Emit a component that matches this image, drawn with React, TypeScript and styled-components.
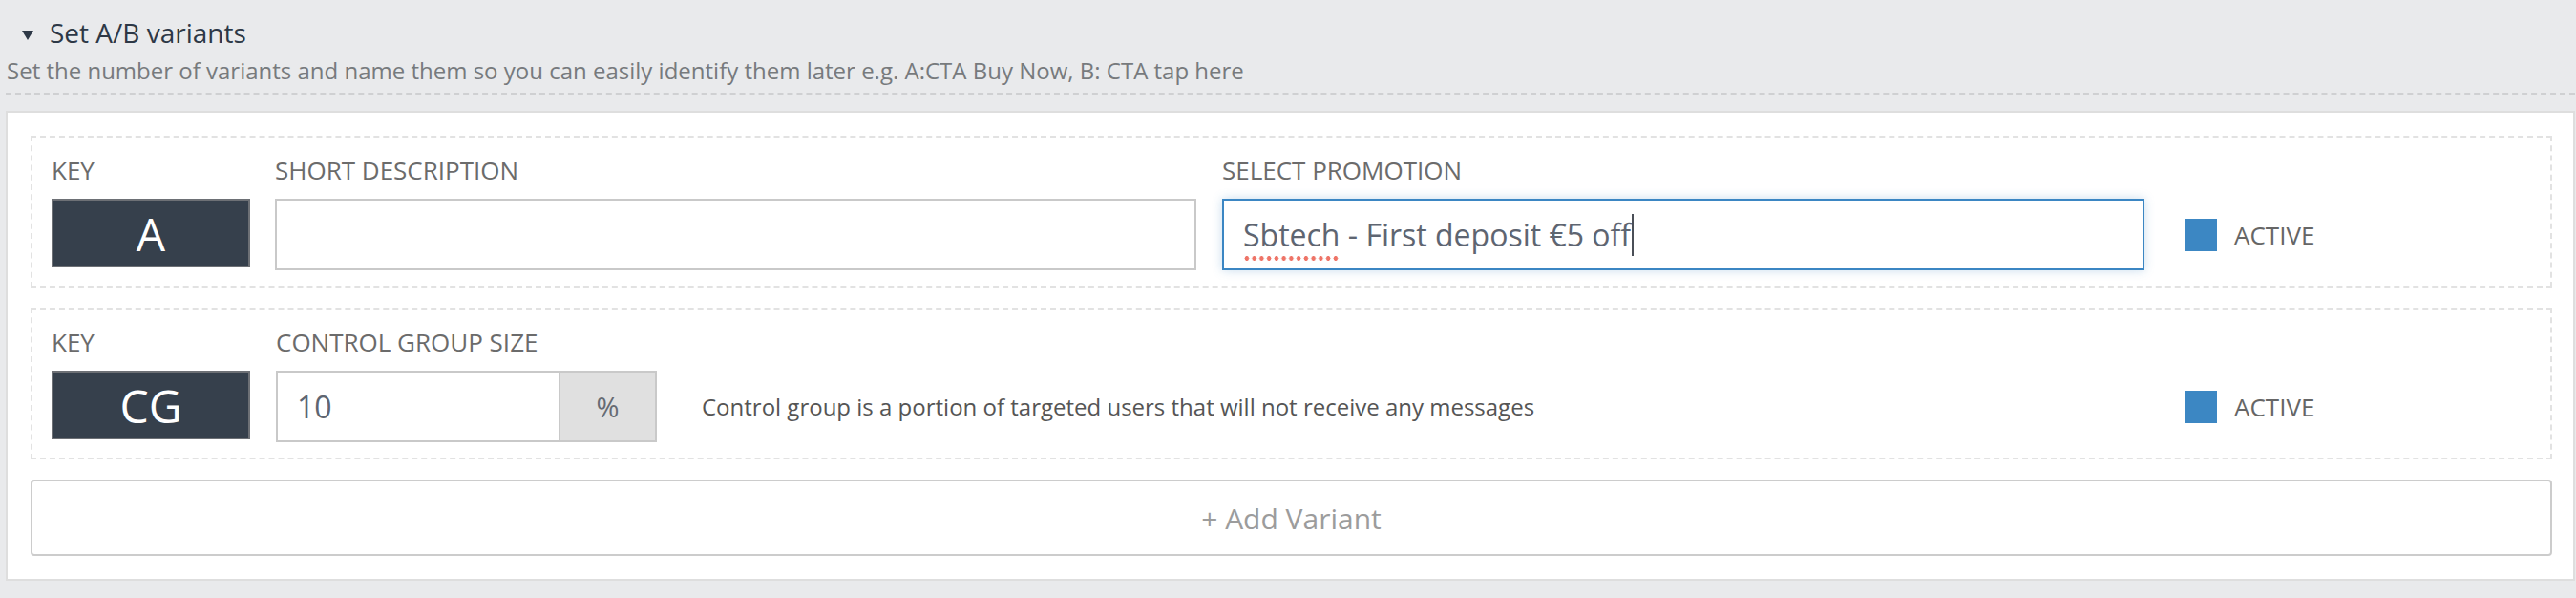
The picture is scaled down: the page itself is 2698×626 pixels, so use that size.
import { FC } from 'react';
import styled, { createGlobalStyle } from 'styled-components';

const GlobalStyle = createGlobalStyle`
  html, body {
    margin: 0;
    padding: 0;
    background: #e9eaec;
    font-family: 'Open Sans', 'Noto Sans', sans-serif;
  }
  #root {
    height: 626px;
  }
`;

const Page = styled.div`
  height: 626px;
  box-sizing: border-box;
  padding: 14px 1px 0 6px;
`;

const Title = styled.h2`
  display: flex;
  align-items: center;
  margin: 0;
  padding-left: 17px;
  font-size: 28px;
  line-height: 41px;
  font-weight: 400;
  color: #2d3846;
`;

const Caret = styled.svg`
  width: 12px;
  height: 10px;
  margin-right: 17px;
  margin-top: 4px;
  flex: none;
`;

const Subtitle = styled.p`
  margin: 4px 0 0 1px;
  font-size: 24px;
  line-height: 29px;
  color: #777a7d;
`;

const Separator = styled.div`
  margin-top: 9px;
  border-top: 2px dashed #cfd0d2;
`;

const Panel = styled.div`
  margin-top: 17px;
  background: #fff;
  border: 2px solid #dedede;
  padding: 24px 22px 24px 24px;
  display: flex;
  flex-direction: column;
  gap: 21px;
`;

const VariantRow = styled.div`
  display: flex;
  align-items: flex-end;
  height: 159px;
  box-sizing: border-box;
  border: 2px dashed #e2e2e2;
  padding: 18px 0 16px 20px;
`;

interface FieldProps {
  $width?: number;
  $gap?: number;
}

const Field = styled.div<FieldProps>`
  display: flex;
  flex-direction: column;
  width: ${(p) => (p.$width ? `${p.$width}px` : 'auto')};
  margin-left: ${(p) => p.$gap ?? 0}px;
  flex: none;
`;

const Label = styled.label`
  font-size: 26px;
  line-height: 33px;
  color: #6b6b6b;
  text-transform: uppercase;
  margin-bottom: 13px;
`;

const KeyBox = styled.div`
  height: 72px;
  box-sizing: border-box;
  background: #36404c;
  border: 2px solid #6d7075;
  color: #fff;
  font-size: 48px;
  display: flex;
  align-items: center;
  justify-content: center;
  margin-bottom: 3px;
`;

const TextBox = styled.div<{ $focused?: boolean; $width?: number }>`
  height: 75px;
  box-sizing: border-box;
  width: ${(p) => (p.$width ? `${p.$width}px` : '100%')};
  background: #fff;
  border: 2px solid ${(p) => (p.$focused ? '#3b86c3' : '#c9c9c9')};
  box-shadow: ${(p) => (p.$focused ? '0 0 10px rgba(59, 134, 195, 0.28)' : 'none')};
  display: flex;
  align-items: center;
  padding: 0 20px;
  font-size: 32px;
  color: #5e6571;
  white-space: nowrap;
`;

const Misspelled = styled.span`
  position: relative;
  &::after {
    content: '';
    position: absolute;
    left: 0;
    right: 0;
    bottom: -6px;
    height: 5px;
    background: radial-gradient(circle, #ee7467 2.2px, transparent 2.6px) 0 0 / 7.75px 5px repeat-x;
  }
`;

const TextCursor = styled.span`
  display: inline-block;
  width: 1.5px;
  height: 44px;
  background: #4a4f57;
  margin-left: 1px;
`;

const InputGroup = styled.div`
  display: flex;
`;

const Addon = styled.div`
  width: 101px;
  height: 75px;
  box-sizing: border-box;
  background: #e0e0e0;
  border: 2px solid #c9c9c9;
  border-left: none;
  display: flex;
  align-items: center;
  justify-content: center;
  font-size: 29px;
  color: #666b73;
`;

const HelpText = styled.div`
  height: 75px;
  margin-left: 47px;
  display: flex;
  align-items: center;
  font-size: 24px;
  color: #555;
  white-space: nowrap;
`;

const ActiveCell = styled.div`
  width: 383px;
  height: 75px;
  margin-left: auto;
  flex: none;
  display: flex;
  align-items: center;
  gap: 18px;
  font-size: 26px;
  color: #666;
`;

const CheckSquare = styled.span`
  width: 34px;
  height: 34px;
  background: #3c87c3;
  display: inline-block;
`;

const AddButton = styled.button`
  height: 80px;
  width: 100%;
  background: #fff;
  border: 2px solid #cccccc;
  border-radius: 4px;
  font-family: inherit;
  font-size: 30px;
  color: #9c9c9c;
  cursor: pointer;
`;

const Active: FC = () => (
  <ActiveCell>
    <CheckSquare />
    ACTIVE
  </ActiveCell>
);

const App: FC = () => (
  <>
    <GlobalStyle />
    <Page>
      <Title>
        <Caret viewBox="0 0 12 10">
          <polygon points="0,0 12,0 6,10" fill="#2d3846" />
        </Caret>
        Set A/B variants
      </Title>
      <Subtitle>
        Set the number of variants and name them so you can easily identify them later e.g.
        A:CTA Buy Now, B: CTA tap here
      </Subtitle>
      <Separator />
      <Panel>
        <VariantRow>
          <Field $width={208}>
            <Label>Key</Label>
            <KeyBox>A</KeyBox>
          </Field>
          <Field $width={965} $gap={26}>
            <Label>Short description</Label>
            <TextBox />
          </Field>
          <Field $width={966} $gap={27}>
            <Label>Select promotion</Label>
            <TextBox $focused>
              <Misspelled>Sbtech</Misspelled>&nbsp;- First deposit €5 off
              <TextCursor />
            </TextBox>
          </Field>
          <Active />
        </VariantRow>

        <VariantRow>
          <Field $width={208}>
            <Label>Key</Label>
            <KeyBox>CG</KeyBox>
          </Field>
          <Field $gap={27}>
            <Label>Control group size</Label>
            <InputGroup>
              <TextBox $width={298}>10</TextBox>
              <Addon>%</Addon>
            </InputGroup>
          </Field>
          <HelpText>
            Control group is a portion of targeted users that will not receive any messages
          </HelpText>
          <Active />
        </VariantRow>

        <AddButton>+ Add Variant</AddButton>
      </Panel>
    </Page>
  </>
);

export default App;
